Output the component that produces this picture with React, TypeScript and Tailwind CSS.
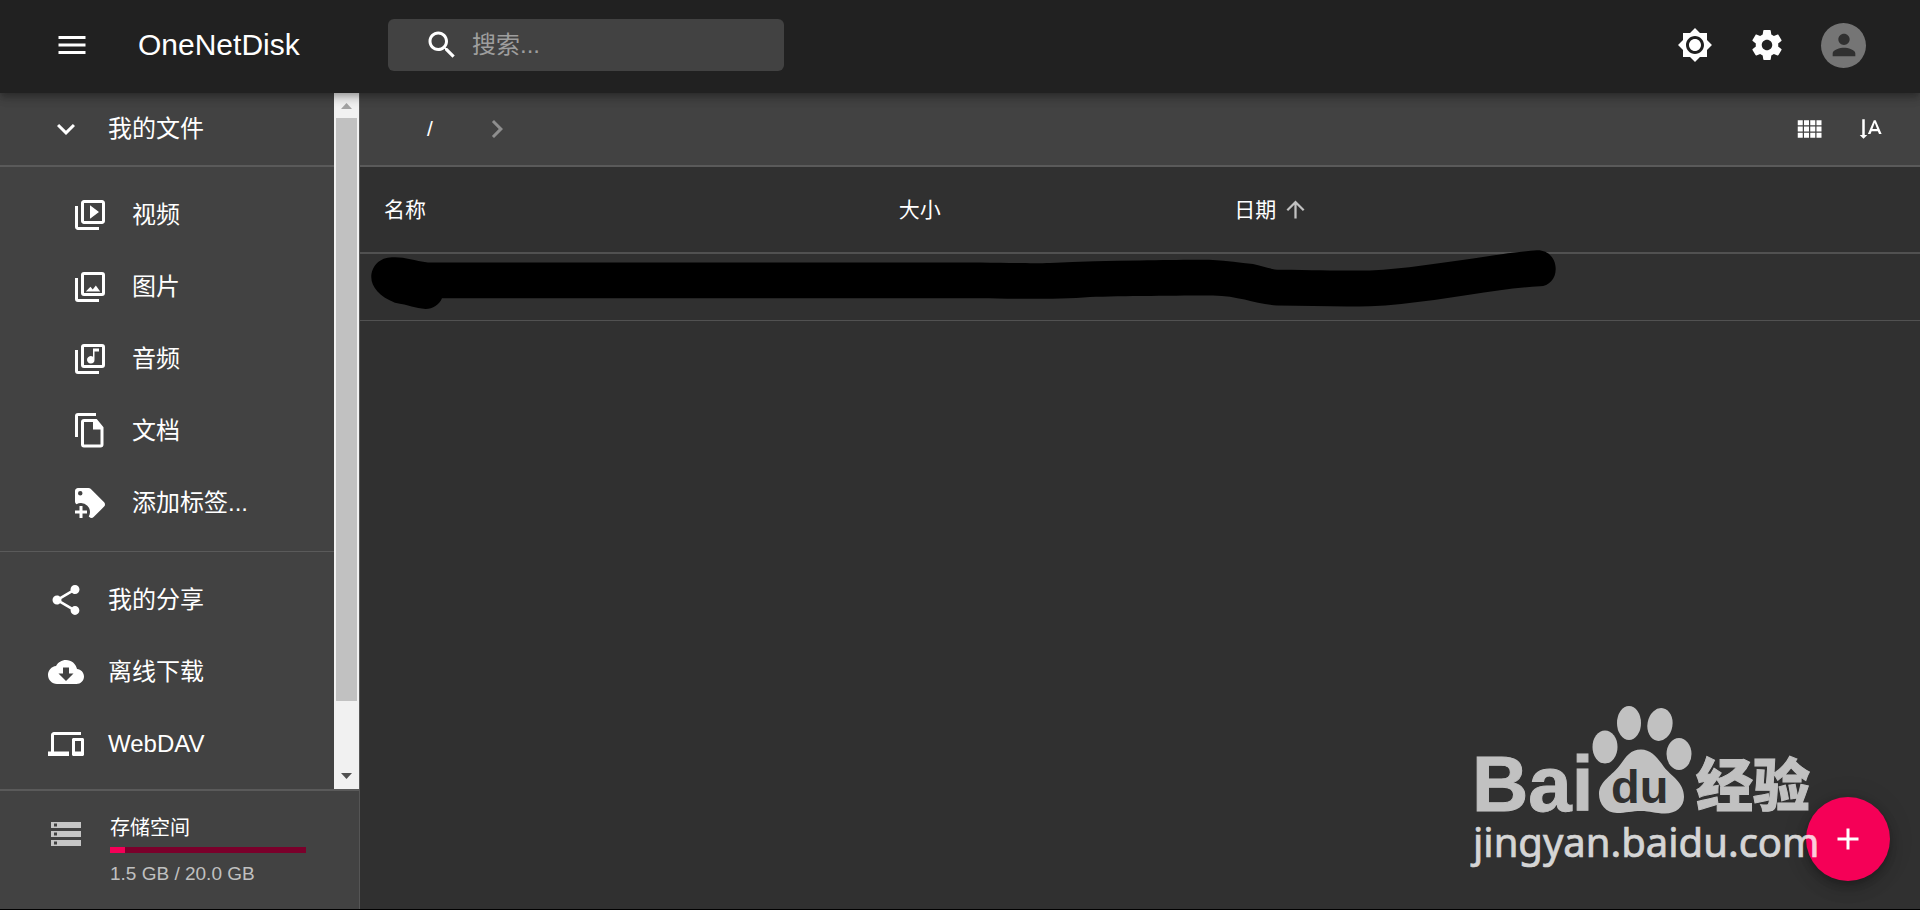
import type { ReactNode } from "react";

function Icon({ d, className }: { d: string; className?: string }) {
  return (
    <svg viewBox="0 0 24 24" fill="currentColor" aria-hidden="true" className={className ?? "size-9 shrink-0"}>
      <path d={d} />
    </svg>
  );
}

const icons = {
  menu: "M3 18h18v-2H3v2zm0-5h18v-2H3v2zm0-7v2h18V6H3z",
  search:
    "M15.5 14h-.79l-.28-.27C15.41 12.59 16 11.11 16 9.5 16 5.91 13.09 3 9.5 3S3 5.91 3 9.5 5.91 16 9.5 16c1.61 0 3.09-.59 4.23-1.57l.27.28v.79l5 4.99L20.49 19l-4.99-5zm-6 0C7.01 14 5 11.99 5 9.5S7.01 5 9.5 5 14 7.01 14 9.5 11.99 14 9.5 14z",
  brightness:
    "M20 8.69V4h-4.69L12 .69 8.69 4H4v4.69L.69 12 4 15.31V20h4.69L12 23.31 15.31 20H20v-4.69L23.31 12 20 8.69zM12 18c-3.31 0-6-2.69-6-6s2.69-6 6-6 6 2.69 6 6-2.69 6-6 6zm0-10c-2.21 0-4 1.79-4 4s1.79 4 4 4 4-1.79 4-4-1.79-4-4-4z",
  settings:
    "M19.43 12.98c.04-.32.07-.64.07-.98s-.03-.66-.07-.98l2.11-1.65c.19-.15.24-.42.12-.64l-2-3.46c-.12-.22-.39-.3-.61-.22l-2.49 1c-.52-.4-1.08-.73-1.69-.98l-.38-2.65C14.46 2.18 14.25 2 14 2h-4c-.25 0-.46.18-.49.42l-.38 2.65c-.61.25-1.17.59-1.69.98l-2.49-1c-.23-.09-.49 0-.61.22l-2 3.46c-.13.22-.07.49.12.64l2.11 1.65c-.04.32-.07.65-.07.98s.03.66.07.98l-2.11 1.65c-.19.15-.24.42-.12.64l2 3.46c.12.22.39.3.61.22l2.49-1c.52.4 1.08.73 1.69.98l.38 2.65c.03.24.24.42.49.42h4c.25 0 .46-.18.49-.42l.38-2.65c.61-.25 1.17-.59 1.69-.98l2.49 1c.23.09.49 0 .61-.22l2-3.46c.12-.22.07-.49-.12-.64l-2.11-1.65zM12 15.5c-1.93 0-3.5-1.57-3.5-3.5s1.57-3.5 3.5-3.5 3.5 1.57 3.5 3.5-1.57 3.5-3.5 3.5z",
  person:
    "M12 12c2.21 0 4-1.79 4-4s-1.79-4-4-4-4 1.79-4 4 1.79 4 4 4zm0 2c-2.67 0-8 1.34-8 4v2h16v-2c0-2.66-5.33-4-8-4z",
  chevronDown: "M7.41 8.59L12 13.17l4.59-4.58L18 10l-6 6-6-6 1.41-1.41z",
  chevronRight: "M10 6L8.59 7.41 13.17 12l-4.58 4.59L10 18l6-6z",
  video:
    "M4 6H2v14c0 1.1.9 2 2 2h14v-2H4V6zm16-4H8c-1.1 0-2 .9-2 2v12c0 1.1.9 2 2 2h12c1.1 0 2-.9 2-2V4c0-1.1-.9-2-2-2zm0 14H8V4h12v12zM12 5.5v9l6-4.5z",
  image:
    "M4 6H2v14a2 2 0 0 0 2 2h14v-2H4V6zm16-4H8a2 2 0 0 0-2 2v12a2 2 0 0 0 2 2h12a2 2 0 0 0 2-2V4a2 2 0 0 0-2-2zm0 14H8V4h12v12zm-10.8-1h9.600l-2.900-4-2.100 2.700-1.500-1.800z",
  music:
    "M4 6H2v14a2 2 0 0 0 2 2h14v-2H4V6zm16-4H8a2 2 0 0 0-2 2v12a2 2 0 0 0 2 2h12a2 2 0 0 0 2-2V4a2 2 0 0 0-2-2zm0 14H8V4h12v12zm-7.5-1a2.5 2.5 0 0 0 2.5-2.5V7h3V5h-4v5.500a2.500 2.500 0 1 0-1.500 4.500z",
  doc: "M16 0H4a2 2 0 0 0-2 2v14h2V2h12V0zm0.500 4H8a2 2 0 0 0-2 2v15a2 2 0 0 0 2 2h11a2 2 0 0 0 2-2V9.500L16.500 4zm2.500 17H8V6h6v5h5v10z",
  tagPlus:
    "M21.41 11.58l-9-9C12.04 2.21 11.53 2 11 2H4c-1.1 0-2 .9-2 2v7c0 .53.21 1.03.59 1.42l.41.4c.9-.54 1.94-.82 3-.82a6 6 0 0 1 6 6c0 1.06-.28 2.09-.82 3l.4.4c.37.38.89.6 1.42.6.53 0 1.04-.21 1.41-.59l7-7c.38-.37.59-.88.59-1.41 0-.53-.21-1.04-.59-1.42zM5.5 7a1.5 1.5 0 1 1 0-3 1.5 1.5 0 0 1 0 3zM10 19H7v3H5v-3H2v-2h3v-3h2v3h3v2z",
  share:
    "M18 16.08c-.76 0-1.44.3-1.96.77L8.91 12.7c.05-.23.09-.46.09-.7s-.04-.47-.09-.7l7.05-4.11c.54.5 1.25.81 2.04.81 1.66 0 3-1.34 3-3s-1.34-3-3-3-3 1.34-3 3c0 .24.04.47.09.7L8.04 9.81C7.5 9.31 6.79 9 6 9c-1.66 0-3 1.34-3 3s1.34 3 3 3c.79 0 1.5-.31 2.04-.81l7.12 4.16c-.05.21-.08.43-.08.65 0 1.61 1.31 2.92 2.92 2.92s2.92-1.31 2.92-2.92-1.31-2.92-2.92-2.92z",
  cloudDownload:
    "M19.35 10.04C18.67 6.59 15.64 4 12 4 9.11 4 6.6 5.64 5.35 8.04 2.34 8.36 0 10.91 0 14c0 3.31 2.69 6 6 6h13c2.76 0 5-2.24 5-5 0-2.64-2.05-4.78-4.65-4.96zM17 13l-5 5-5-5h3V9h4v4h3z",
  devices:
    "M4 6h18V4H4c-1.1 0-2 .9-2 2v11H0v3h14v-3H4V6zm19 2h-6c-.55 0-1 .45-1 1v10c0 .55.45 1 1 1h6c.55 0 1-.45 1-1V9c0-.55-.45-1-1-1zm-1 9h-4v-7h4v7z",
  storage:
    "M2 20h20v-4H2v4zm2-3h2v2H4v-2zM2 4v4h20V4H2zm4 3H4V5h2v2zm-4 7h20v-4H2v4zm2-3h2v2H4v-2z",
  grid: "M3 9h4V5H3v4zm0 5h4v-4H3v4zm5 0h4v-4H8v4zm5 0h4v-4h-4v4zM8 9h4V5H8v4zm5-4v4h4V5h-4zm5 9h4v-4h-4v4zM3 19h4v-4H3v4zm5 0h4v-4H8v4zm5 0h4v-4h-4v4zm5 0h4v-4h-4v4zm0-14v4h4V5h-4z",
  sort: "M15.75 5h-1.5L9.5 16h2.1l.9-2.2h5l.9 2.2h2.1L15.75 5zm-2.62 7L15 6.98 16.87 12h-3.74zM6 19.75l3-3H7V4.25H5v12.5H3l3 3z",
  arrowUp: "M4 12l1.41 1.41L11 7.83V20h2V7.83l5.58 5.59L20 12l-8-8-8 8z",
  plus: "M19 13h-6v6h-2v-6H5v-2h6V5h2v6h6v2z",
};

function NavItem({ icon, children, nested }: { icon: string; children: ReactNode; nested?: boolean }) {
  return (
    <li>
      <a
        href="#"
        className={`flex h-[72px] items-center gap-6 text-2xl text-white ${nested ? "pl-[72px]" : "pl-12"}`}
      >
        <Icon d={icon} />
        {children}
      </a>
    </li>
  );
}

function Header() {
  return (
    <header className="relative z-10 flex h-[93px] shrink-0 items-center bg-[#212121] pr-[54px] pb-[3px] pl-[54px] shadow-[0_3px_6px_-1px_rgba(0,0,0,0.2),0_6px_8px_0_rgba(0,0,0,0.14),0_1px_15px_0_rgba(0,0,0,0.12)]">
      <button type="button" aria-label="菜单">
        <Icon d={icons.menu} />
      </button>
      <h1 className="ml-12 w-[250px] text-3xl font-normal">OneNetDisk</h1>
      <label className="flex h-[52px] w-[396px] items-center gap-3 rounded-md bg-[#424242] pl-9">
        <Icon d={icons.search} />
        <input
          type="text"
          aria-label="搜索"
          placeholder="搜索..."
          className="w-full min-w-0 bg-transparent text-2xl outline-none placeholder:text-[#9e9e9e]"
        />
      </label>
      <div className="ml-auto flex items-center gap-9">
        <button type="button" aria-label="切换主题">
          <Icon d={icons.brightness} />
        </button>
        <button type="button" aria-label="设置">
          <Icon d={icons.settings} />
        </button>
        <button
          type="button"
          aria-label="用户"
          className="flex size-[45px] items-center justify-center rounded-full bg-[#757575] text-[#303030]"
        >
          <Icon d={icons.person} className="size-[34px]" />
        </button>
      </div>
    </header>
  );
}

function Scrollbar() {
  return (
    <div aria-hidden="true" className="flex w-[25px] shrink-0 flex-col bg-[#f1f1f1] px-0.5">
      <svg viewBox="0 0 21 25" className="h-[25px] w-[21px] shrink-0" fill="#a3a3a3">
        <path d="M5 16L10.500 10L16 16z" />
      </svg>
      <div className="grow-[583] bg-[#c1c1c1]" />
      <div className="grow-[63]" />
      <svg viewBox="0 0 21 25" className="h-[25px] w-[21px] shrink-0" fill="#505050">
        <path d="M5 9L10.500 15L16 9z" />
      </svg>
    </div>
  );
}

function Sidebar() {
  return (
    <aside className="flex w-[360px] shrink-0 flex-col border-r border-[#555] bg-[#424242]">
      <div className="flex min-h-0 grow">
        <nav className="min-w-0 grow">
          <ul className="border-b-2 border-[#5a5a5a]">
            <NavItem icon={icons.chevronDown}>我的文件</NavItem>
          </ul>
          <ul className="border-b border-[#5a5a5a] py-3">
            <NavItem nested icon={icons.video}>视频</NavItem>
            <NavItem nested icon={icons.image}>图片</NavItem>
            <NavItem nested icon={icons.music}>音频</NavItem>
            <NavItem nested icon={icons.doc}>文档</NavItem>
            <NavItem nested icon={icons.tagPlus}>添加标签...</NavItem>
          </ul>
          <ul className="pt-3">
            <NavItem icon={icons.share}>我的分享</NavItem>
            <NavItem icon={icons.cloudDownload}>离线下载</NavItem>
            <NavItem icon={icons.devices}>WebDAV</NavItem>
          </ul>
        </nav>
        <Scrollbar />
      </div>
      <section className="flex h-[120px] shrink-0 gap-[26px] border-t-2 border-[#5a5a5a] pt-[25px] pl-12">
        <div className="text-[#c6c6c6]">
          <Icon d={icons.storage} />
        </div>
        <div className="w-[196px]">
          <h2 className="text-xl leading-6 font-normal">存储空间</h2>
          <div className="mt-[7px] flex h-1.5 bg-[#7a002b]">
            <div className="bg-[#f50057]" style={{ width: `${(1.5 / 20) * 100}%` }} />
          </div>
          <p className="mt-[9px] text-[19px] leading-6 text-[#c0c0c0]">1.5 GB / 20.0 GB</p>
        </div>
      </section>
    </aside>
  );
}

function FileList() {
  return (
    <div className="relative">
      <table className="w-full table-fixed text-left text-[21px] leading-7">
        <thead>
          <tr className="h-[86px] border-b-2 border-[#515151]">
            <th className="w-[33%] pl-6 font-normal">名称</th>
            <th className="w-[21.5%] pl-6 font-normal">大小</th>
            <th className="pl-6 font-normal">
              <span className="flex items-center gap-[6px]">
                日期
                <Icon d={icons.arrowUp} className="size-[27px] text-[#c1c1c1]" />
              </span>
            </th>
          </tr>
        </thead>
        <tbody>
          <tr className="h-[67px] border-b border-[#515151]">
            <td />
            <td />
            <td />
          </tr>
        </tbody>
      </table>
      <svg viewBox="371 247 1186 64" aria-hidden="true" className="absolute top-[80px] left-[11px] h-16 w-[1186px]">
        <path d="M392 257.300C404 256.500 413 260.500 428 262.500H980C1010 263 1035 263.500 1050 263C1080 261.500 1110 260.500 1140 260.500C1170 260 1195 259.500 1213 260C1227 261 1240 262.500 1253 264C1263 266 1270 269.500 1280 269.700C1320 270 1345 271 1370 270.400C1405 269 1440 263 1473 258.500C1495 255 1518 251.500 1537 250.300C1549 250 1555.700 259 1555.700 269C1555.700 279 1549 286 1540 286.300C1527 287 1513 288.500 1500 290.300C1458 296 1410 305 1370 306.300C1340 307 1310 306 1277 305.600C1255 304 1240 296 1213 295.500C1180 295.500 1120 296 1090 297C1060 299.500 1010 299 980 298.300H442C439 305 433 309 425.600 309C415 308 409 305 395 302.700C380 297 371.300 287 371.300 277.300C371.300 266 380 257.500 392 257.300Z" />
      </svg>
    </div>
  );
}

function Watermark() {
  return (
    <svg
      viewBox="1470 700 360 175"
      aria-label="Bai du 经验 jingyan.baidu.com"
      className="pointer-events-none absolute right-[90px] bottom-[35px] z-10 h-[175px] w-[360px]"
      fill="#fff"
    >
      <g opacity="0.7">
        <text x="1472" y="812" fontFamily="Liberation Sans" fontWeight="700" fontSize="78" stroke="#fff">
          Bai
        </text>
        <ellipse cx="1605" cy="748" rx="12.500" ry="16.500" />
        <ellipse cx="1629" cy="724" rx="12" ry="17" />
        <ellipse cx="1660" cy="725.500" rx="12.500" ry="16.500" transform="rotate(10 1660 725.500)" />
        <ellipse cx="1679" cy="755" rx="12.500" ry="16" />
        <path d="M1641 750.500C1651 750.500 1658 759 1664 768C1671 777 1684 783 1684 798C1684 808 1676 814.500 1665 814.500C1655 814.500 1650 812 1641 812C1632 812 1626 814 1617 814C1606 814 1599 805 1599 795C1599 782 1613 776 1620 766C1626 758 1630 750.500 1641 750.500Z" />
        <text x="1696" y="807" fontFamily="Noto Sans CJK SC" fontWeight="900" fontSize="57" stroke="#fff">
          经验
        </text>
      </g>
      <text x="1611" y="804" fill="#303030" fontFamily="Liberation Sans" fontWeight="700" fontSize="47">
        du
      </text>
      <text x="1473" y="858" opacity="0.8" fontFamily="Noto Sans" fontSize="40" stroke="#fff" strokeWidth="0.7">
        jingyan.baidu.com
      </text>
    </svg>
  );
}

export default function App() {
  return (
    <div className="relative flex min-h-screen flex-col border-b border-black bg-[#303030] font-['Liberation_Sans','Noto_Sans_CJK_SC',sans-serif] text-white">
      <Header />
      <div className="flex grow">
        <Sidebar />
        <main className="min-w-0 grow">
          <div className="flex h-[74px] items-center border-b-2 border-[#5a5a5a] bg-[#424242] pr-[34px] pl-[67px]">
            <nav aria-label="路径" className="flex items-center gap-[46px]">
              <a href="#" className="text-[21px] leading-7">
                /
              </a>
              <Icon d={icons.chevronRight} className="size-9 text-[#8e8e8e]" />
            </nav>
            <div className="ml-auto flex items-center gap-8">
              <button type="button" aria-label="网格视图">
                <Icon d={icons.grid} className="size-[30px]" />
              </button>
              <button type="button" aria-label="排序">
                <Icon d={icons.sort} className="size-[30px]" />
              </button>
            </div>
          </div>
          <FileList />
        </main>
      </div>
      <button
        type="button"
        aria-label="新建"
        className="absolute right-[30px] bottom-[28px] flex size-[84px] items-center justify-center rounded-full bg-[#f50057] shadow-[0_4px_8px_-1px_rgba(0,0,0,0.2),0_9px_15px_0_rgba(0,0,0,0.14),0_1px_27px_0_rgba(0,0,0,0.12)]"
      >
        <Icon d={icons.plus} />
      </button>
      <Watermark />
    </div>
  );
}
